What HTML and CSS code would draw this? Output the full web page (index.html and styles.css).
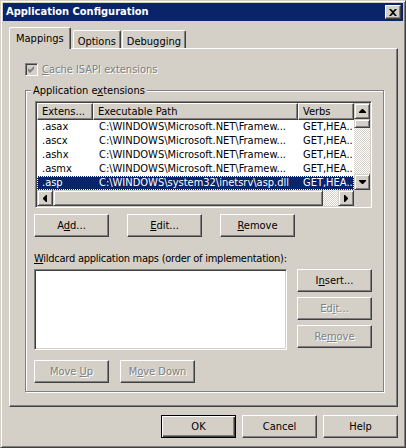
FILE: index.html
```html
<!DOCTYPE html>
<html lang="en">
<head>
    <meta charset="utf-8">
    <title>Application Configuration</title>
    <link rel="stylesheet" href="styles.css">
</head>
<body>
<div class="window">
    <div class="titlebar">
        <span class="title">Application Configuration</span>
        <span class="closebtn">
            <svg width="8" height="7" viewBox="0 0 8 7"><path d="M0 0h2l2 2 2-2h2L5 3.5 8 7H6L4 5 2 7H0l3-3.5z" fill="#000"/></svg>
        </span>
    </div>

    <div class="tabs">
        <div class="tab selected">Mappings</div>
        <div class="tab first-after">Options</div>
        <div class="tab">Debugging</div>
    </div>

    <div class="panel">
        <div class="checkrow disabled">
            <span class="checkbox">
                <svg width="9" height="9" viewBox="0 0 9 9"><path d="M1 3l2 2 4-4v3L3 8 1 6z" fill="#808080"/></svg>
            </span>
            <span><u>C</u>ache ISAPI extensions</span>
        </div>

        <fieldset class="group">
            <legend>Application e<u>x</u>tensions</legend>

            <div class="listview">
                <div class="lv-main">
                    <div class="lv-body">
                        <div class="lv-head">
                            <div class="hcell c1">Extens...</div>
                            <div class="hcell c2">Executable Path</div>
                            <div class="hcell c3">Verbs</div>
                        </div>
                        <div class="lv-row"><div class="cell c1">.asax</div><div class="cell c2">C:\WINDOWS\Microsoft.NET\Framew...</div><div class="cell c3">GET,HEA..</div></div>
                        <div class="lv-row"><div class="cell c1">.ascx</div><div class="cell c2">C:\WINDOWS\Microsoft.NET\Framew...</div><div class="cell c3">GET,HEA..</div></div>
                        <div class="lv-row"><div class="cell c1">.ashx</div><div class="cell c2">C:\WINDOWS\Microsoft.NET\Framew...</div><div class="cell c3">GET,HEA..</div></div>
                        <div class="lv-row"><div class="cell c1">.asmx</div><div class="cell c2">C:\WINDOWS\Microsoft.NET\Framew...</div><div class="cell c3">GET,HEA..</div></div>
                        <div class="lv-row active"><div class="cell c1">.asp</div><div class="cell c2">C:\WINDOWS\system32\inetsrv\asp.dll</div><div class="cell c3">GET,HEA..</div></div>
                    </div>
                    <div class="vscroll">
                        <div class="sbtn"><svg width="7" height="4" viewBox="0 0 7 4"><path d="M3 0h1l3 3v1H0V3z" fill="#000"/></svg></div>
                        <div class="vthumb"></div>
                        <div class="track"></div>
                        <div class="sbtn"><svg width="7" height="4" viewBox="0 0 7 4"><path d="M0 0h7v1L4 4H3L0 1z" fill="#000"/></svg></div>
                    </div>
                </div>
                <div class="hscroll">
                    <div class="sbtn"><svg width="4" height="7" viewBox="0 0 4 7"><path d="M0 3v1l3 3h1V0H3z" fill="#000"/></svg></div>
                    <div class="hthumb"></div>
                    <div class="track"></div>
                    <div class="sbtn"><svg width="4" height="7" viewBox="0 0 4 7"><path d="M0 0v7h1l3-3V3L1 0z" fill="#000"/></svg></div>
                    <div class="corner"></div>
                </div>
            </div>

            <div class="btnrow">
                <div class="btn">A<u>d</u>d...</div>
                <div class="btn"><u>E</u>dit...</div>
                <div class="btn"><u>R</u>emove</div>
            </div>

            <div class="label"><u>W</u>ildcard application maps (order of implementation):</div>

            <div class="wildrow">
                <div class="listbox"></div>
                <div class="sidebtns">
                    <div class="btn">I<u>n</u>sert...</div>
                    <div class="btn disabled">Ed<u>i</u>t...</div>
                    <div class="btn disabled">Re<u>m</u>ove</div>
                </div>
            </div>

            <div class="btnrow moverow">
                <div class="btn disabled">Move <u>U</u>p</div>
                <div class="btn disabled">M<u>o</u>ve Down</div>
            </div>
        </fieldset>
    </div>

    <div class="footer">
        <div class="btn default">OK</div>
        <div class="btn">Cancel</div>
        <div class="btn">Help</div>
    </div>
</div>
</body>
</html>
```

FILE: styles.css
```css
html, body {
    margin: 0;
    padding: 0;
}
body {
    width: 406px;
    height: 448px;
    background: #D4D0C8;
    font-family: Tahoma, "DejaVu Sans Condensed", "Liberation Sans", sans-serif;
    font-size: 11px;
    color: #000;
}
u {
    text-decoration: underline;
    text-underline-offset: 1px;
}

/* window frame */
.window {
    box-sizing: border-box;
    width: 406px;
    height: 448px;
    border: 1px solid;
    border-color: #D4D0C8 #404040 #404040 #D4D0C8;
    box-shadow: inset 1px 1px #fff, inset -1px -1px #808080;
    padding: 2px;
    display: flex;
    flex-direction: column;
}
.titlebar {
    height: 18px;
    background: #0A246A;
    display: flex;
    align-items: center;
    padding-left: 3px;
}
.title {
    color: #fff;
    font-weight: bold;
    line-height: 18px;
}
.closebtn {
    margin-left: auto;
    margin-right: 2px;
    box-sizing: border-box;
    width: 16px;
    height: 14px;
    background: #D4D0C8;
    border: 1px solid;
    border-color: #fff #404040 #404040 #fff;
    box-shadow: inset -1px -1px #808080;
    display: flex;
    align-items: center;
    justify-content: center;
    padding-right: 1px;
}

/* tabs */
.tabs {
    display: flex;
    align-items: flex-end;
    height: 21px;
    padding-top: 6px;
    margin-left: 6px;
}
.tab {
    box-sizing: border-box;
    height: 18px;
    padding: 4px 4px 0 4px;
    line-height: 13px;
    border: 1px solid;
    border-bottom: none;
    border-color: #fff #404040 #404040 #fff;
    border-radius: 2px 2px 0 0;
    box-shadow: inset -1px 0 #808080;
    margin-right: 1px;
}
.tab.selected {
    height: 22px;
    padding: 4px 6px 0 6px;
    margin-bottom: -1px;
    margin-right: 0;
    background: #D4D0C8;
    position: relative;
    z-index: 1;
}
.tab.first-after {
    margin-left: 2px;
}

/* page */
.panel {
    margin: 0 5px 0 6px;
    border: 1px solid;
    border-color: #fff #404040 #404040 #fff;
    box-shadow: inset -1px -1px #808080;
    padding: 13px 13px 14px 15px;
}
.checkrow {
    display: flex;
    align-items: center;
    height: 15px;
    gap: 4px;
}
.disabled {
    color: #808080;
    text-shadow: 1px 1px 0 #fff;
}
.checkbox {
    box-sizing: border-box;
    width: 13px;
    height: 13px;
    border: 1px solid;
    border-color: #808080 #fff #fff #808080;
    box-shadow: inset 1px 1px #404040, inset -1px -1px #D4D0C8;
    background: #D4D0C8;
    padding: 1px;
    display: flex;
}

.group {
    margin: 7px 0 0 0;
    min-width: 0;
    border: 1px solid #808080;
    box-shadow: inset 1px 1px #fff, 1px 1px #fff;
    padding: 4px 10px 8px 8px;
}
.group legend {
    padding: 0 2px;
    margin-left: -3px;
    line-height: 13px;
    background: #D4D0C8;
}

/* list view */
.listview {
    box-sizing: border-box;
    width: 337px;
    margin-left: 1px;
    border: 1px solid;
    border-color: #808080 #fff #fff #808080;
    box-shadow: inset 1px 1px #404040, inset -1px -1px #D4D0C8;
    padding: 1px;
    background: #fff;
}
.lv-main {
    display: flex;
}
.lv-body {
    width: 317px;
    overflow: hidden;
}
.lv-head {
    display: flex;
    height: 17px;
    background: #D4D0C8;
}
.hcell {
    box-sizing: border-box;
    height: 17px;
    line-height: 15px;
    border: 1px solid;
    border-color: #fff #404040 #404040 #fff;
    box-shadow: inset -1px -1px #808080;
    padding-left: 4px;
    white-space: nowrap;
}
.c1 { width: 56px; flex: none; }
.c2 { width: 205px; flex: none; }
.c3 { width: 56px; flex: none; }
.lv-row {
    display: flex;
    height: 14px;
    line-height: 14px;
}
.cell {
    box-sizing: border-box;
    padding-left: 5px;
    white-space: nowrap;
}
.cell.c2 {
    padding-left: 6px;
}
.lv-row.active {
    background: #0A246A;
    color: #fff;
    outline: 1px dotted #fff;
    outline-offset: -1px;
}

.vscroll {
    width: 16px;
    display: flex;
    flex-direction: column;
}
.sbtn, .vthumb, .hthumb {
    box-sizing: border-box;
    flex: none;
    width: 16px;
    height: 16px;
    background: #D4D0C8;
    border: 1px solid;
    border-color: #D4D0C8 #404040 #404040 #D4D0C8;
    box-shadow: inset 1px 1px #fff, inset -1px -1px #808080;
    display: flex;
    align-items: center;
    justify-content: center;
}
.vthumb {
    height: 9px;
}
.track {
    flex: 1;
    background: repeating-conic-gradient(#fff 0 25%, #D4D0C8 0 50%) 0 0 / 2px 2px;
}
.hscroll {
    display: flex;
    height: 16px;
    background: #D4D0C8;
}
.hthumb {
    width: 270px;
}
.corner {
    width: 16px;
    height: 16px;
    background: #D4D0C8;
}

/* buttons */
.btnrow {
    display: flex;
    gap: 18px;
    margin-top: 6px;
}
.btn {
    box-sizing: border-box;
    width: 75px;
    height: 23px;
    flex: none;
    line-height: 21px;
    text-align: center;
    background: #D4D0C8;
    border: 1px solid;
    border-color: #fff #404040 #404040 #fff;
    box-shadow: inset -1px -1px #808080;
}
.btn.default {
    border-color: #000;
    box-shadow: inset 1px 1px #fff, inset -1px -1px #404040, inset -2px -2px #808080;
}
.label {
    margin-top: 15px;
    line-height: 13px;
    letter-spacing: -0.25px;
}
.wildrow {
    display: flex;
    gap: 10px;
    margin-top: 4px;
}
.listbox {
    box-sizing: border-box;
    width: 253px;
    height: 81px;
    background: #fff;
    border: 1px solid;
    border-color: #808080 #fff #fff #808080;
    box-shadow: inset 1px 1px #404040, inset -1px -1px #D4D0C8;
}
.sidebtns {
    display: flex;
    flex-direction: column;
    gap: 5px;
}
.moverow {
    margin-top: 10px;
    gap: 11px;
}

.footer {
    display: flex;
    justify-content: flex-end;
    gap: 6px;
    margin-top: 8px;
    padding-right: 5px;
}
```
